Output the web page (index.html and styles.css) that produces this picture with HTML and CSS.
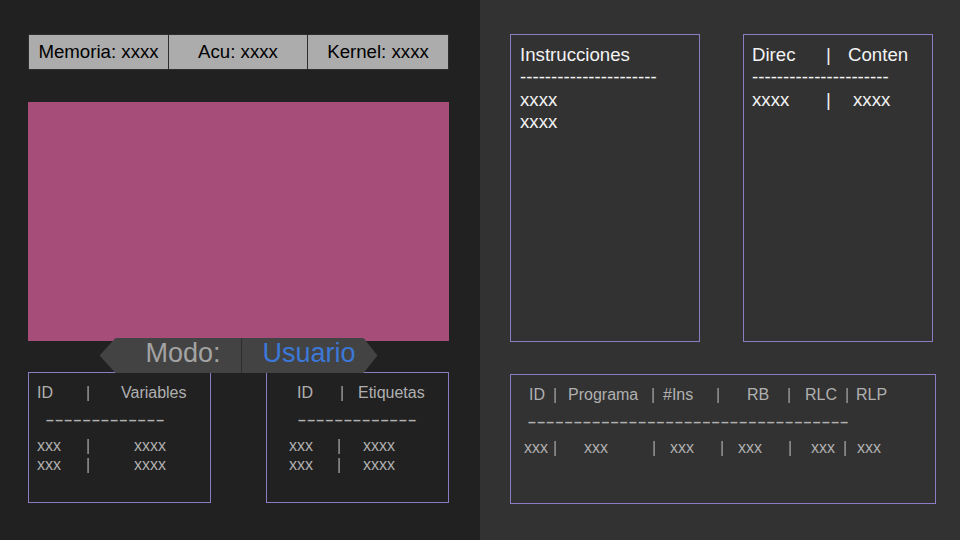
FILE: index.html
```html
<!DOCTYPE html>
<html lang="es">
<head>
    <meta charset="UTF-8">
    <meta name="viewport" content="width=device-width, initial-scale=1.0">
    <title>Simulador</title>
    <link rel="stylesheet" href="styles.css">
</head>
<body>
    <div class="slide">
        <!-- lado izquierdo: estado, pantalla y tablas -->
        <section class="lado izq">
            <div class="estado">
                <div class="celda">Memoria: xxxx</div>
                <div class="celda">Acu: xxxx</div>
                <div class="celda">Kernel: xxxx</div>
            </div>

            <div class="pantalla"></div>

            <div class="modo">
                <span class="modo-txt">Modo:</span>
                <span class="modo-val">Usuario</span>
            </div>

            <div class="tablas">
                <div class="tabla var">
                    <div class="fila cab"><span>ID</span><span class="bar">|</span><span>Variables</span></div>
                    <div class="guion">–––––––––––––</div>
                    <div class="fila dato"><span>xxx</span><span class="bar">|</span><span>xxxx</span></div>
                    <div class="fila dato"><span>xxx</span><span class="bar">|</span><span>xxxx</span></div>
                </div>
                <div class="tabla etq">
                    <div class="fila cab"><span>ID</span><span class="bar">|</span><span>Etiquetas</span></div>
                    <div class="guion">–––––––––––––</div>
                    <div class="fila dato"><span>xxx</span><span class="bar">|</span><span>xxxx</span></div>
                    <div class="fila dato"><span>xxx</span><span class="bar">|</span><span>xxxx</span></div>
                </div>
            </div>
        </section>

        <!-- lado derecho: instrucciones, memoria y procesos -->
        <section class="lado der">
            <div class="cajas">
                <div class="caja ins">
                    <div>Instrucciones</div>
                    <div>----------------------</div>
                    <div>xxxx</div>
                    <div>xxxx</div>
                </div>
                <div class="caja mem">
                    <div class="fila cab"><span>Direc</span><span>|</span><span>Conten</span></div>
                    <div>----------------------</div>
                    <div class="fila dato"><span>xxxx</span><span>|</span><span>xxxx</span></div>
                </div>
            </div>

            <div class="tabla proc">
                <div class="fila cab">
                    <span>ID</span><span class="bar">|</span><span>Programa</span><span class="bar">|</span><span>#Ins</span><span class="bar">|</span><span>RB</span><span class="bar">|</span><span>RLC</span><span class="bar">|</span><span>RLP</span>
                </div>
                <div class="guion">–––––––––––––––––––––––––––––––––––</div>
                <div class="fila dato">
                    <span>xxx</span><span class="bar">|</span><span>xxx</span><span class="bar">|</span><span>xxx</span><span class="bar">|</span><span>xxx</span><span class="bar">|</span><span>xxx</span><span class="bar">|</span><span>xxx</span>
                </div>
            </div>
        </section>
    </div>
</body>
</html>
```

FILE: styles.css
```css
body {
    margin: 0;
    background-color: #212121;
    font-family: "Liberation Sans", Arial, sans-serif;
}

.slide {
    display: flex;
    width: 960px;
    height: 540px;
    overflow: hidden;
}

.lado {
    width: 480px;
    box-sizing: border-box;
}

.izq {
    background-color: #212121;
    padding: 34px 31px 0 28px;
}

.der {
    background-color: #323232;
    padding: 34px 25px 0 30px;
}

/* barra de estado */
.estado {
    display: grid;
    grid-template-columns: 141px 139px 141px;
    height: 36px;
}

.celda {
    display: flex;
    align-items: center;
    justify-content: center;
    background-color: #acacac;
    border: 1px solid #2e2e2e;
    border-left: none;
    color: #000;
    font-size: 18.67px;
}

.celda:first-child {
    border-left: 1px solid #2e2e2e;
}

.pantalla {
    margin-top: 32px;
    height: 239px;
    background-color: #a64d79;
}

/* etiqueta de modo */
.modo {
    position: relative;
    display: flex;
    width: 278px;
    height: 35px;
    margin: -3px auto 0;
    background-color: #434343;
    clip-path: polygon(16px 0, calc(100% - 14px) 0, 100% 50%, calc(100% - 14px) 100%, 16px 100%, 0 50%);
    font-size: 27px;
    line-height: 31px;
}

.modo-txt {
    width: 142px;
    box-sizing: border-box;
    padding-left: 46px;
    color: #a3a3a3;
    border-right: 1px solid #2e2e2e;
}

.modo-val {
    padding-left: 21px;
    color: #3c78d8;
}

/* tablas pequeñas */
.tablas {
    display: flex;
    justify-content: space-between;
    margin-top: -1px;
}

.tabla {
    box-sizing: border-box;
    border: 1px solid #8e7cc3;
    color: #b0b0b0;
    font-size: 16px;
    line-height: 19px;
}

.tablas .tabla {
    width: 183px;
    height: 131px;
    padding-top: 10px;
}

.fila {
    display: grid;
}

/* capa propia para que la barra no salga con bordes de color */
.bar {
    color: #a0a0a0;
    will-change: transform;
}

.guion {
    margin-top: 9px;
    margin-bottom: 6px;
    font-size: 14px;
    font-weight: bold;
    letter-spacing: 1.4px;
}

.var {
    padding-left: 8px;
}

.var .cab {
    grid-template-columns: 49px 35px auto;
}

.var .dato {
    grid-template-columns: 49px 48px auto;
}

.var .guion {
    margin-left: 9px;
}

.etq {
    padding-left: 22px;
}

.etq .cab {
    margin-left: 8px;
    grid-template-columns: 43px 18px auto;
}

.etq .dato {
    grid-template-columns: 48px 26px auto;
}

.etq .guion {
    margin-left: 9px;
}

/* cajas de la derecha */
.cajas {
    display: flex;
    gap: 43px;
}

.caja {
    width: 190px;
    height: 308px;
    box-sizing: border-box;
    border: 1px solid #8e7cc3;
    padding: 9px 0 0 9px;
    color: #f3f3f3;
    font-size: 18.67px;
    line-height: 22.4px;
}

.mem {
    padding-left: 8px;
}

.mem .cab {
    grid-template-columns: 74px 22px auto;
}

.mem .dato {
    grid-template-columns: 74px 27px auto;
}

.proc {
    width: 426px;
    height: 130px;
    margin-top: 32px;
    padding: 10px 0 0 13px;
}

.proc .cab {
    margin-left: 5px;
    grid-template-columns: 24px 15px 83px 12px 53px 31px 40px 18px 40px 11px auto;
}

.proc .dato {
    grid-template-columns: 29px 31px 68px 18px 50px 18px 50px 23px 32px 14px auto;
}

.proc .guion {
    margin-left: 4px;
}
```
